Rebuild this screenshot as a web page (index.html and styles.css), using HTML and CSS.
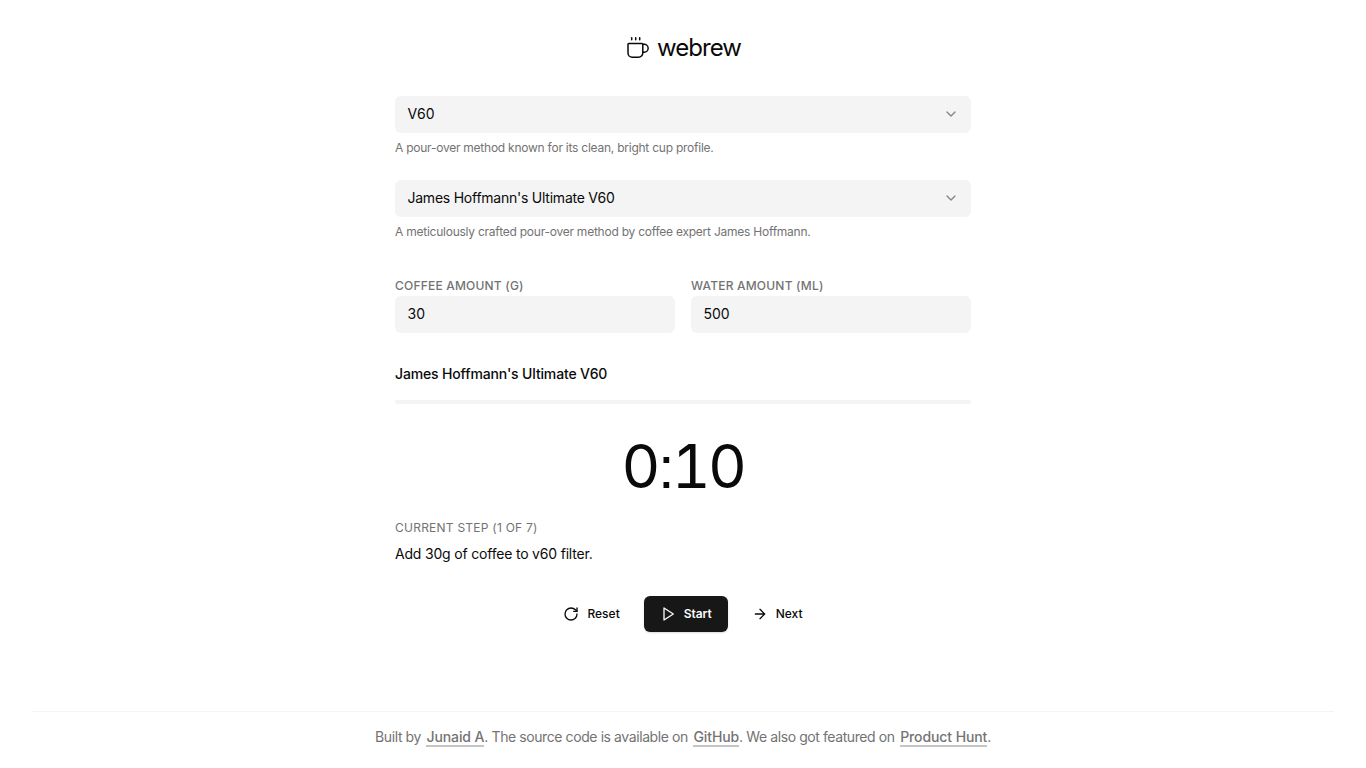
FILE: index.html
```html
<!DOCTYPE html>
<html lang="en">
  <head>
    <meta charset="UTF-8" />
    <meta name="viewport" content="width=device-width, initial-scale=1.0" />
    <title>webrew</title>
    <link rel="stylesheet" href="styles.css">
  </head>
  <body>
    <main class="container">
      <header class="logo">
        <svg class="logo-icon" viewBox="0 0 24 24">
          <path d="M3.8 7.5H17a.8.8 0 0 1 .8.8V17a4.3 4.3 0 0 1-4.3 4.3H7.3A4.3 4.3 0 0 1 3 17V8.3a.8.8 0 0 1 .8-.8Z" />
          <path d="M18 8.3h1.2a3.8 3.8 0 0 1 0 7.9H18" />
          <path d="M6.7 1.7v2M10.7 1.7v2M14.7 1.7v2" />
        </svg>
        <h1>webrew</h1>
      </header>

      <!-- Method and recipe selection -->
      <div class="field">
        <button class="control select" type="button">
          <span>V60</span>
          <svg class="chevron" viewBox="0 0 24 24"><path d="m6 9 6 6 6-6" /></svg>
        </button>
        <p class="hint">A pour-over method known for its clean, bright cup profile.</p>
      </div>
      <div class="field">
        <button class="control select" type="button">
          <span class="recipe-name">James Hoffmann's Ultimate V60</span>
          <svg class="chevron" viewBox="0 0 24 24"><path d="m6 9 6 6 6-6" /></svg>
        </button>
        <p class="hint">A meticulously crafted pour-over method by coffee expert James Hoffmann.</p>
      </div>

      <div class="amounts">
        <div>
          <label for="coffee">Coffee amount (g)</label>
          <input class="control" type="text" id="coffee" value="30" />
        </div>
        <div>
          <label for="water">Water amount (ml)</label>
          <input class="control" type="text" id="water" value="500" />
        </div>
      </div>

      <!-- Timer -->
      <h2>James Hoffmann's Ultimate V60</h2>
      <div class="progress-bar"></div>
      <div class="time-remaining">0<span class="colon">:</span>10</div>

      <p class="step-label">Current step (1 of 7)</p>
      <p class="step-text">Add 30g of coffee to v60 filter.</p>

      <div class="buttons">
        <button class="btn btn-reset" type="button">
          <svg viewBox="0 0 24 24">
            <path d="M21 12a9 9 0 1 1-9-9c2.52 0 4.93 1 6.74 2.74L21 8" />
            <path d="M21 3v5h-5" />
          </svg>
          <span>Reset</span>
        </button>
        <button class="btn btn-start" type="button">
          <svg viewBox="0 0 24 24"><path d="m6 3 14 9-14 9V3z" /></svg>
          <span>Start</span>
        </button>
        <button class="btn btn-next" type="button">
          <svg viewBox="0 0 24 24"><path d="M5 12h14M12 5l7 7-7 7" /></svg>
          <span>Next</span>
        </button>
      </div>
    </main>

    <footer>
      <p>Built by <a href="#">Junaid A</a>. The source code is available on <a href="#">GitHub</a>. We also got featured on <a href="#">Product Hunt</a>.</p>
    </footer>
  </body>
</html>
```
FILE: styles.css
```css
* {
  box-sizing: border-box;
}

body {
  margin: 0;
  height: 768px;
  overflow: hidden;
  font-family: Inter, "Liberation Sans", sans-serif;
  font-size: 14px;
  color: #0a0a0a;
  background-color: #ffffff;
}

h1,
h2,
p {
  margin: 0;
  font-weight: 400;
}

button,
input {
  font: inherit;
  color: inherit;
  border: none;
}

svg {
  fill: none;
  stroke: currentColor;
  stroke-width: 2;
  stroke-linecap: round;
  stroke-linejoin: round;
}

.container {
  width: 576px;
  margin: 0 auto;
  padding-top: 32px;
}

.logo {
  display: flex;
  align-items: center;
  justify-content: center;
  gap: 8px;
  height: 32px;
  margin-bottom: 32px;
}

.logo-icon {
  width: 24px;
  height: 24px;
  stroke-width: 1.5;
}

.logo h1 {
  font-size: 24px;
  line-height: 32px;
  letter-spacing: -0.95px;
}

.field {
  height: 84px;
}

.control {
  display: flex;
  align-items: center;
  justify-content: space-between;
  width: 100%;
  height: 37px;
  padding: 0 12px 2px 12.5px;
  border-radius: 6px;
  background-color: #f4f4f4;
}

.recipe-name {
  letter-spacing: -0.24px;
}

.chevron {
  width: 16px;
  height: 16px;
  color: #858585;
}

.hint {
  margin-top: 7px;
  font-size: 12px;
  line-height: 16px;
  letter-spacing: -0.24px;
  color: #737373;
}

.amounts {
  display: grid;
  grid-template-columns: 1fr 1fr;
  gap: 16px;
  margin-top: 13px;
}

label {
  display: block;
  height: 19px;
  font-size: 12px;
  font-weight: 500;
  line-height: 18px;
  letter-spacing: 0.2px;
  text-transform: uppercase;
  color: #737373;
}

h2 {
  margin-top: 31px;
  font-size: 14px;
  font-weight: 500;
  line-height: 20px;
  letter-spacing: -0.15px;
}

.progress-bar {
  height: 4px;
  margin-top: 16px;
  border-radius: 2px;
  background-color: #f4f4f4;
}

.time-remaining {
  height: 60px;
  margin-top: 32px;
  font-size: 60px;
  line-height: 60px;
  letter-spacing: -2.5px;
  text-align: center;
  font-variant-numeric: tabular-nums;
}

.colon {
  font-family: "Liberation Sans", sans-serif;
  line-height: 1;
  letter-spacing: -3px;
}

.step-label {
  margin-top: 24px;
  font-size: 12px;
  line-height: 16px;
  letter-spacing: 0.24px;
  text-transform: uppercase;
  color: #737373;
}

.step-text {
  margin-top: 8px;
  line-height: 20px;
  letter-spacing: -0.19px;
}

.buttons {
  display: flex;
  justify-content: center;
  gap: 8px;
  margin-top: 32px;
}

.btn {
  display: flex;
  align-items: center;
  gap: 8px;
  height: 36px;
  padding: 0 16px;
  font-size: 12px;
  font-weight: 500;
  border-radius: 6px;
  background-color: transparent;
}

.btn span {
  padding-bottom: 1px;
}

.btn svg {
  width: 16px;
  height: 16px;
}

.btn-start {
  font-weight: 600;
  letter-spacing: -0.05px;
  color: #fafafa;
  background-color: #171717;
  box-shadow: 0 1px 2px rgba(0, 0, 0, 0.15);
}

footer {
  margin: 79px 32px 0;
  padding-top: 15px;
  border-top: 1px solid #f4f4f4;
  line-height: 20px;
  letter-spacing: -0.41px;
  text-align: center;
  color: #737373;
}

footer a {
  margin-left: 2px;
  font-weight: 500;
  letter-spacing: -0.1px;
  color: inherit;
  text-decoration: none;
  border-bottom: 2px solid #c4c4c4;
}
```
